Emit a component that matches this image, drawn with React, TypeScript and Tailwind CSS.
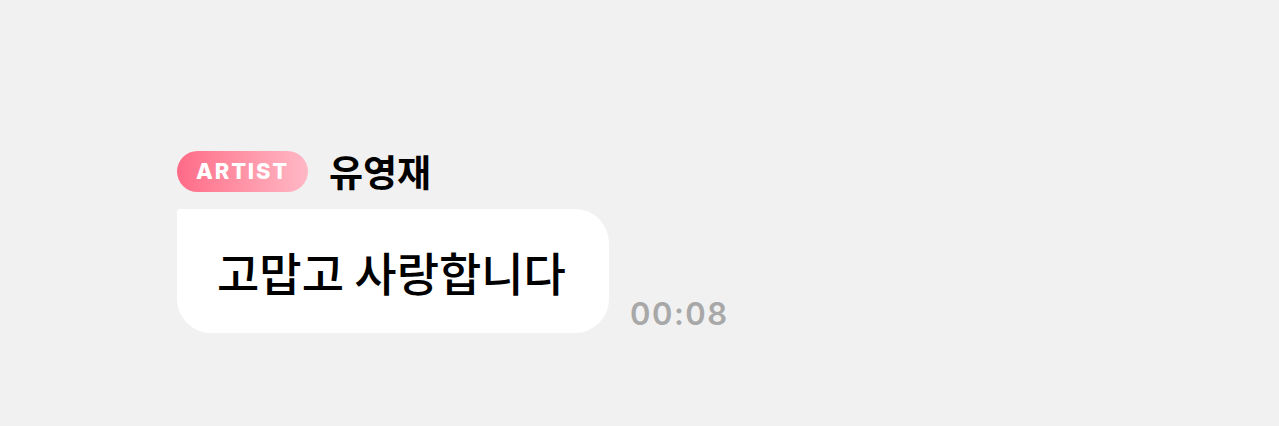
export default function App() {
  return (
    <div className="min-h-screen w-full bg-[#f1f1f1] pl-[177px] pt-[151px] font-['Inter','Noto_Sans_CJK_KR',sans-serif]">
      <div className="flex flex-col gap-[17px]">
        {/* sender line */}
        <div className="flex items-center gap-[21px]">
          <span className="flex h-[41px] w-[131px] items-center justify-center rounded-full bg-gradient-to-r from-[#ff6a87] to-[#ffb8c6] text-[22px] font-extrabold tracking-[1.8px] text-white">
            ARTIST
          </span>
          <span className="text-[37px] font-bold leading-none text-black font-['Noto_Sans_CJK_KR',sans-serif]">
            유영재
          </span>
        </div>

        {/* message bubble + time */}
        <div className="flex items-end gap-[21px]">
          <div className="flex h-[124px] w-[432px] items-center rounded-[34px] rounded-tl-[3px] bg-white pl-[40px]">
            <span className="text-[46px] font-medium leading-none text-black font-['Noto_Sans_CJK_KR',sans-serif]">
              고맙고 사랑합니다
            </span>
          </div>
          <span className="pb-[4px] text-[31px] font-semibold leading-none tracking-[1.5px] text-[#a8a8a8]">
            00:08
          </span>
        </div>
      </div>
    </div>
  );
}
